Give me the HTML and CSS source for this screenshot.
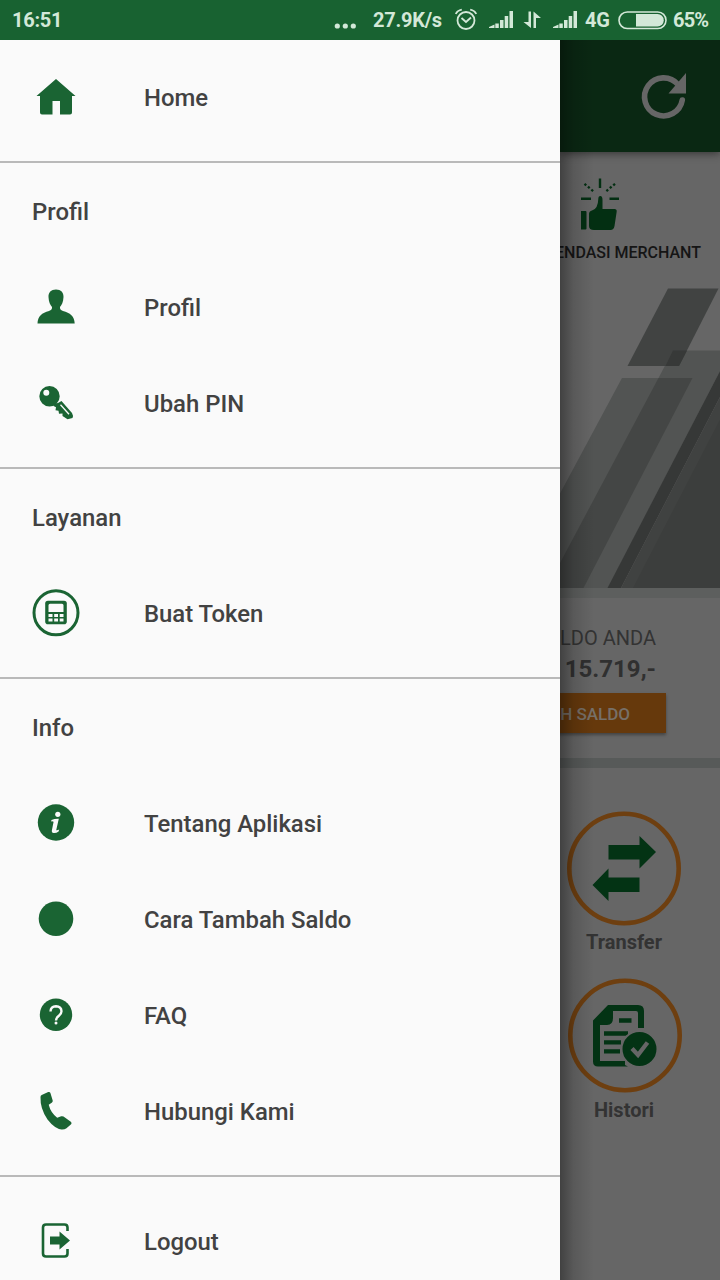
FILE: index.html
```html
<!DOCTYPE html>
<html lang="id">
<head>
<meta charset="utf-8">
<title>Menu</title>
<link rel="stylesheet" href="styles.css">
</head>
<body>
<header class="status">
  <span class="clock">16:51</span>
  <svg class="status-dots" width="22" height="6" viewBox="334 23 22 6"><circle cx="337.300" cy="26" r="2.600"/><circle cx="345.300" cy="26" r="2.600"/><circle cx="353.300" cy="26" r="2.600"/></svg>
  <span class="speed">27.9K/s</span>
  <svg class="alarm" width="22" height="22" viewBox="455 9 22 22"><g fill="none" stroke="#d3e8d8" stroke-width="1.800"><circle cx="466" cy="20.500" r="8.500"/><path d="M461.500 18l4.500 4 5-4.500M455.800 14q1.500-3.500 6-4.300M476.200 14q-1.500-3.500-6-4.300"/></g></svg>
  <svg class="signal" width="25" height="18" viewBox="488 12 25 18"><path d="M489 29v-1l5.500-2.500V29zM495.300 24.500h3.500V29h-3.500zM500 21h3.500v8H500zM504.700 17h3.500v12h-3.500zM509.500 12h3.500v17h-3.500z"/></svg>
  <svg class="updown" width="18" height="18" viewBox="523 11 18 18"><path d="M528.500 11.500h2.500V28l-7.500-6h5zM533.500 28V11.500l7.500 6.500h-5v10z"/></svg>
  <svg class="signal" width="25" height="18" viewBox="488 12 25 18"><path d="M489 29v-1l5.500-2.500V29zM495.300 24.500h3.500V29h-3.500zM500 21h3.500v8H500zM504.700 17h3.500v12h-3.500zM509.500 12h3.500v17h-3.500z"/></svg>
  <span class="network">4G</span>
  <svg class="battery" width="49" height="19" viewBox="619 11 49 19"><rect x="619" y="12" width="47" height="16.500" rx="8.250" fill="none" stroke="#d3e8d8" stroke-width="1.600"/><path d="M636 14h21.500a6.200 6.200 0 0 1 0 12.500H636z"/></svg>
  <span class="percent">65%</span>
</header>

<div class="screen">
  <nav class="drawer">
    <ul class="group">
      <li class="item"><svg class="icon" viewBox="32 74 48 48"><path d="M56 79l19.500 17H72v16.500q0 2-2 2h-10V101h-7.500v13.500H42q-2 0-2-2V96h-3.500z"/></svg>Home</li>
    </ul>
    <ul class="group">
      <li class="title">Profil</li>
      <li class="item"><svg class="icon" viewBox="32 284 48 48"><path d="M56 289.500c5 0 7.700 3 7.500 7.500-.2 5-1.800 8-3.500 10-.3 2 .7 3.200 3 4 7 2 11.500 5 11.700 12.500H37.500c.2-7.500 4.500-10.500 11.500-12.500 2.300-.8 3.300-2 3-4-1.700-2-3.300-5-3.500-10-.2-4.500 2.500-7.500 7.500-7.500z"/></svg>Profil</li>
      <li class="item"><svg class="icon" viewBox="32 380 48 48"><path fill-rule="evenodd" d="M49.500 386a10.200 10.200 0 1 1 0 20.400 10.200 10.200 0 0 1 0-20.400zM46.300 389.800a3 3 0 1 0 0 6 3 3 0 0 0 0-6z"/><path d="M61.500 401L72 413q1.500 2.500.5 5l-5 1.200-5-3.200v-2.500l-3.500.2-.5-3-3-.5.500-3-2.500-1.200v-2.200q5-.3 8-2.800z"/><path d="M60.500 404.800l8.500 9.500" fill="none" stroke="#fafafa" stroke-width="1.300"/></svg>Ubah PIN</li>
    </ul>
    <ul class="group">
      <li class="title">Layanan</li>
      <li class="item"><svg class="icon" viewBox="32 590 48 48"><circle cx="56" cy="612.800" r="22" fill="none" stroke="#1a6433" stroke-width="3"/><rect x="45.200" y="600.800" width="21.600" height="23.400" rx="2.800"/><path fill="#fafafa" d="M50 603.800h12q1.500 0 1.500 1.500v6.700h-15v-6.700q0-1.500 1.500-1.500zM48.500 614h4v3h-4zM54.200 614h3.800v3h-3.800zM59.700 614h3.800v3h-3.800zM48.500 618.500h4v3h-4zM54.200 618.500h3.800v3h-3.800zM59.700 618.500h3.800v3h-3.800z"/></svg>Buat Token</li>
    </ul>
    <ul class="group">
      <li class="title">Info</li>
      <li class="item"><svg class="icon" viewBox="32 800 48 48"><circle cx="56" cy="822.500" r="18.200"/><g fill="#fafafa"><circle cx="57.800" cy="814.300" r="2.600"/><path d="M51.500 820q3-1.300 7.300-1.200l-2.600 11.400q1.500.2 3-.6l-.6 1.900q-2.500 1.800-5 1.500-2.200-.3-1.700-2.700l1.700-8.500q-1-.7-2.500-.3z"/></g></svg>Tentang Aplikasi</li>
      <li class="item"><svg class="icon" viewBox="32 896 48 48"><circle cx="56" cy="918.700" r="17.300"/></svg>Cara Tambah Saldo</li>
      <li class="item"><svg class="icon" viewBox="32 992 48 48"><circle cx="56" cy="1014.700" r="16.200"/><path d="M50.500 1011.500q.2-5 5.500-5.200 5.300.2 5.500 5 0 2.400-2.600 4.500-2.900 2.200-2.900 4.700" fill="none" stroke="#fafafa" stroke-width="2.400"/><circle cx="56" cy="1022.900" r="1.500" fill="#fafafa"/></svg>FAQ</li>
      <li class="item"><svg class="icon" viewBox="32 1088 48 48"><path d="M40.500 1097q0-1.300 1.200-2l6.500-3q1.700-.5 2.200 1l2.300 7.500q.3 1.500-1 2.300l-3 2q2 8 8.500 13l4-1.500q1.200-.4 2.300.3l7.300 5.200q1.500 1.200.3 2.400l-4.600 4q-2 1.500-5 1.300-7-1-14-10-7.500-11-7-22.500z"/></svg>Hubungi Kami</li>
    </ul>
    <ul class="group last">
      <li class="item"><svg class="icon" viewBox="32 1218 48 48"><path d="M67.500 1231v-3.500q0-3-3-3H46q-3 0-3 3v26q0 3 3 3h18.500q3 0 3-3V1249" fill="none" stroke="#1a6433" stroke-width="2.600"/><path d="M50 1236.500h9.500v-5l10.500 9-10.500 9v-5H50z"/></svg>Logout</li>
    </ul>
  </nav>

  <main class="page">
    <div class="toolbar"><svg width="48" height="52" viewBox="640 71 48 52"><path d="M678 84.500A19 19 0 1 0 682.300 100" fill="none" stroke="#666" stroke-width="5.600" stroke-linecap="round"/><path fill="#666" d="M686 73v20.500h-17.500z"/></svg></div>
    <section class="promo">
      <svg class="thumb" width="40" height="53" viewBox="580 178 40 53"><path d="M581 211h4.500q1 0 1 1v16.500q0 1-1 1H581zM589 214q0-3 3-3.500 6-1.500 6.300-11.500 0-3 2-3 2.200 0 2.200 4v9h12q2.500 0 2.200 2.500L614.500 226q-.7 4-4 4H594q-5 0-5-4z"/><path d="M600 178.500v9.500M581 198.700h10M609.500 198.700h9.500" fill="none" stroke="#032f12" stroke-width="2.400"/><path d="M584.500 183.800l10 8.500M615 183.800l-10 8.500" fill="none" stroke="#032f12" stroke-width="2.300" stroke-dasharray="2.300 2.200"/></svg>
      <div class="promo-label">REKOMENDASI MERCHANT</div>
    </section>
    <svg class="banner" width="160" height="300" viewBox="560 288 160 300">
      <path fill="#525453" d="M622 378h36.500l14.500-27.500H720V371L608 588h-48v-94.500z"/>
      <path fill="#444645" d="M658.500 378H692.500L583.500 588H560v-25z"/>
      <path fill="#3c3e3d" d="M720 400v188h-98z"/>
      <path fill="#363837" d="M720 371v26L621 588h-13.500z"/>
      <path fill="#404241" d="M720 397v22.500L633 588h-12z"/>
      <path fill="#414342" d="M668 288.500h50.500L679 366h-51.500z"/>
      <path fill="#373938" d="M673 350.500h14L679 366h-13.500z"/>
    </svg>
    <section class="balance">
      <div class="balance-label">SALDO ANDA</div>
      <div class="amount">Rp. 15.719,-</div>
      <div class="button">TAMBAH SALDO</div>
    </section>
    <section class="actions">
      <div class="action"><svg width="116" height="116" viewBox="566 810 116 116"><circle cx="624" cy="868.500" r="54.700" fill="none" stroke="#6e3f10" stroke-width="4.600"/><path fill="#033314" d="M608.500 845h31v-9L656 852l-16.500 16.500v-9h-31zM639.500 877.500h-31v-9L592.500 885l16 16v-9h31z"/></svg><span>Transfer</span></div>
      <div class="action"><svg width="116" height="116" viewBox="566 978 116 116"><circle cx="625" cy="1035.500" r="54.700" fill="none" stroke="#6e3f10" stroke-width="4.600"/><path fill="#033314" fill-rule="evenodd" d="M608 1005h30q6 0 6 6v17h-6v-15q0-2-2-2h-23v7q0 7-6 7h-7v37q0 2 2 2h21l5 2.500h-30q-5 0-5-5v-41z"/><path d="M600 1063.500h25" stroke="#033314" stroke-width="5"/><path d="M619 1020.500h12.500M604 1033.500h24M604 1042.300h17M604 1051.300h16" fill="none" stroke="#033314" stroke-width="4.300"/><circle cx="639.500" cy="1049" r="18" fill="#033314" stroke="#666" stroke-width="2"/><path d="M632 1048.500l6 6.500 9.500-12.500" fill="none" stroke="#666" stroke-width="4.300"/></svg><span>Histori</span></div>
    </section>
  </main>
</div>
</body>
</html>
```
FILE: styles.css
```css
* { box-sizing: border-box; }
body { margin: 0; width: 720px; height: 1280px; overflow: hidden; font-family: Roboto, "Noto Sans", sans-serif; background: #666; }
svg { display: block; flex: none; overflow: visible; }
.status { display: flex; align-items: center; height: 40px; padding: 0 12px; background: #186231; color: #d3e8d8; font-size: 20px; font-weight: 700; letter-spacing: -.25px; line-height: 40px; }
.status svg { fill: #d3e8d8; }
.clock { margin-right: auto; }
.status-dots { margin: 12px 17px 0 0; }
.speed { width: 70px; white-space: nowrap; }
.alarm { margin-left: 12px; }
.signal { margin-left: 11px; }
.updown { margin-left: 10px; }
.network { width: 25px; margin-left: 8px; }
.battery { margin: 0 5px 0 9px; }
.percent { width: 35px; letter-spacing: -.8px; white-space: nowrap; }
.screen { display: flex; height: 1240px; }
.drawer { width: 560px; flex: none; padding-top: 10px; background: #fafafa; color: #424242; font-size: 23.9px; font-weight: 500; overflow: hidden; }
.group { margin: 0; padding: 0 0 15px; list-style: none; }
.group + .group { border-top: 2px solid #b9b9b9; padding-top: 1px; }
.group.last { padding-top: 17px; }
.title, .item { display: flex; align-items: center; height: 96px; padding-left: 32px; white-space: nowrap; }
.icon { width: 48px; height: 48px; margin-right: 64px; fill: #1a6433; }
.page { position: relative; width: 160px; height: 1240px; overflow: hidden; background: #666; }
.page::after { content: ""; position: absolute; inset: 0 auto 0 0; width: 34px; background: linear-gradient(90deg, rgba(0,0,0,.36), rgba(0,0,0,.13) 40%, transparent); }
.toolbar { position: relative; display: flex; justify-content: flex-end; height: 112px; padding: 31px 32px 0 0; background: #0a2813; box-shadow: 0 2px 8px rgba(0,0,0,.45); }
.promo { height: 136px; padding-top: 26px; }
.thumb { margin-left: 20px; fill: #032f12; }
.promo-label { display: flex; justify-content: flex-end; padding-right: 19px; margin-top: 12px; font-size: 16px; line-height: 20px; font-weight: 500; color: #151515; white-space: nowrap; }
.banner { overflow: hidden; }
.balance { display: flex; flex-direction: column; align-items: flex-end; height: 180px; padding: 26px 54px 0 0; border-top: 10px solid #5d5f5e; border-bottom: 10px solid #575a59; white-space: nowrap; }
.balance-label { margin-right: 10px; font-size: 20px; line-height: 28px; color: #333; }
.amount { margin-right: 10px; font-size: 24px; line-height: 34px; font-weight: 700; color: #303030; }
.button { margin-top: 7px; height: 40px; padding: 0 36px; line-height: 42px; font-size: 17px; font-weight: 500; background: #66390c; color: #777068; box-shadow: 0 2px 3px rgba(0,0,0,.35); }
.actions { padding: 42px 0 0 6px; }
.action { display: flex; flex-direction: column; align-items: center; width: 116px; height: 168px; color: #333; font-size: 20px; font-weight: 700; line-height: 32px; }
```
